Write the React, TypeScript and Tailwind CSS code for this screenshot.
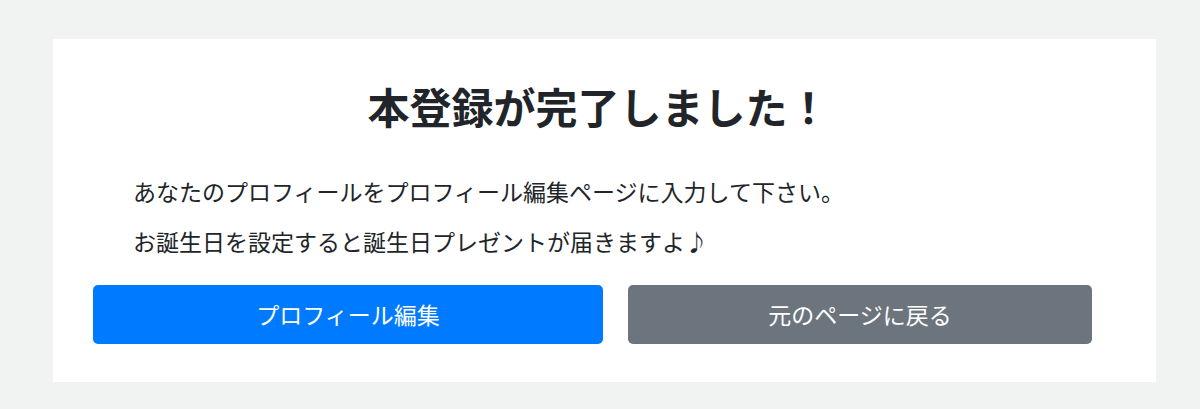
import React from 'react';

const font = { fontFamily: '"Noto Sans CJK JP", "Noto Sans", sans-serif' };

export default function App() {
  return (
    <div className="min-h-screen bg-[#f1f2f2] pt-[39px] pb-[27px]" style={font}>
      <div className="ml-[53px] w-[1103px] bg-white pt-[42px] pb-[38px]">
        <h1 className="pr-[12px] text-center text-[42px] font-bold leading-[50px] text-[#212529]">
          本登録が完了しました！
        </h1>
        <div className="mt-[45px] pl-[80px] text-[23px] leading-[30px] text-[#212529]">
          <p>あなたのプロフィールをプロフィール編集ページに入力して下さい。</p>
          <p className="mt-[20px]">お誕生日を設定すると誕生日プレゼントが届きますよ♪</p>
        </div>
        <div className="mt-[29px] flex gap-[25px] pl-[40px]">
          <button className="h-[59px] w-[510px] rounded-[5px] bg-[#007bff] text-[23px] text-white">
            プロフィール編集
          </button>
          <button className="h-[59px] w-[464px] rounded-[5px] bg-[#6c757d] text-[23px] text-white">
            元のページに戻る
          </button>
        </div>
      </div>
    </div>
  );
}
